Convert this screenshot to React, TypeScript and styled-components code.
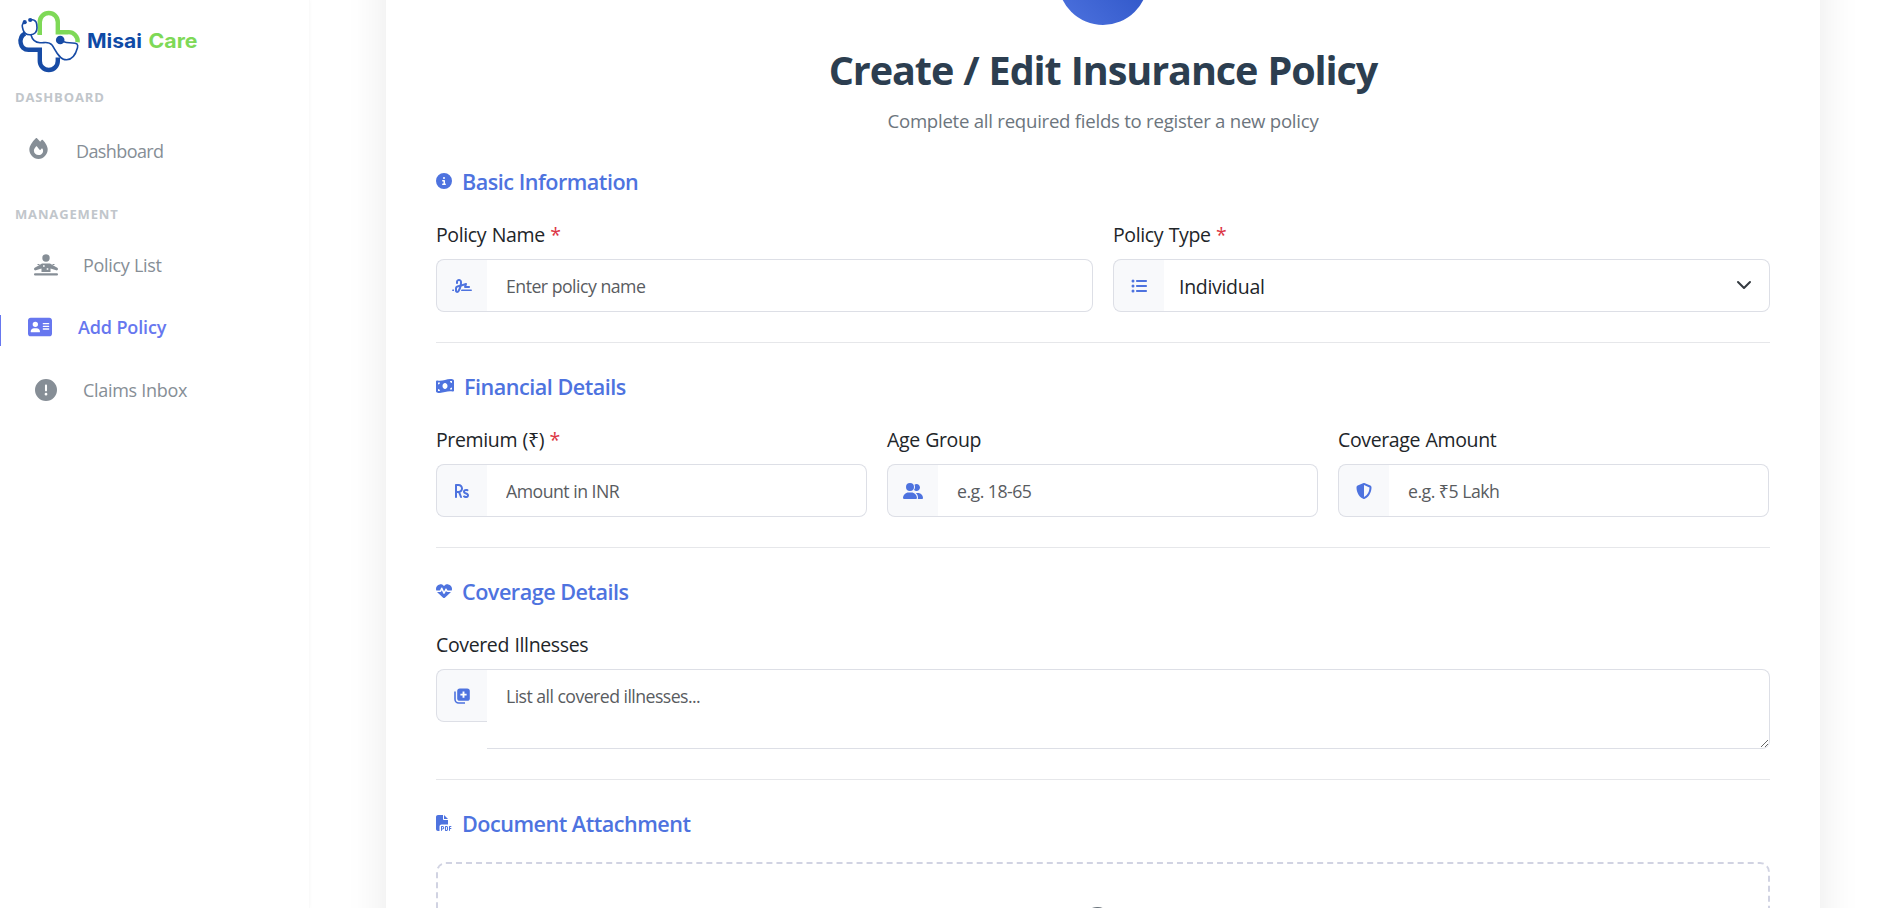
import React from "react";
import styled, { createGlobalStyle } from "styled-components";
import {
  FaAddressCard,
  FaCircleExclamation,
  FaCircleInfo,
  FaFilePdf,
  FaFire,
  FaHeartPulse,
  FaListUl,
  FaMoneyBillWave,
  FaRupeeSign,
  FaShieldHalved,
  FaSignature,
  FaUserGroup,
} from "react-icons/fa6";

const GlobalStyle = createGlobalStyle`
  *, *::before, *::after { box-sizing: border-box; }
  body {
    margin: 0;
    background: #fff;
    color: #212529;
    font-family: "Open Sans", "Noto Sans", sans-serif;
    overflow: hidden;
  }
`;

const Page = styled.div`
  display: flex;
  height: 908px;
  overflow: hidden;
`;

const Sidebar = styled.aside`
  flex: 0 0 310px;
  background: #fff;
  border-right: 1px solid #fafafa;
  box-shadow: 1px 0 3px rgba(0, 0, 0, 0.02);
`;

const Brand = styled.div`
  height: 84px;
  padding: 8px 0 0 15px;
`;

const GroupLabel = styled.div`
  height: 26px;
  padding-left: 15px;
  font-size: 13px;
  line-height: 26px;
  font-weight: 700;
  letter-spacing: 0.85px;
  color: #c1c6cb;
`;

const NavList = styled.nav<{ $top: number; $bottom: number }>`
  display: flex;
  flex-direction: column;
  padding: ${(p) => p.$top}px 0 ${(p) => p.$bottom}px;
`;

const NavItem = styled.a<{
  $active?: boolean;
  $indent: number;
  $gap: number;
  $spacing?: number;
  $lift?: number;
}>`
  display: flex;
  align-items: center;
  height: 62.5px;
  padding-left: ${(p) => p.$indent}px;
  gap: ${(p) => p.$gap}px;
  font-size: 18px;
  letter-spacing: ${(p) => p.$spacing ?? -0.3}px;
  font-weight: ${(p) => (p.$active ? 600 : 400)};
  color: ${(p) => (p.$active ? "#6777ef" : "#868e96")};
  background: ${(p) =>
    p.$active ? "linear-gradient(#6777ef, #6777ef) 0 60% / 1px 31px no-repeat" : "none"};
  svg {
    flex: none;
    margin-bottom: ${(p) => p.$lift ?? 0}px;
  }
`;

const Main = styled.main`
  flex: 1;
  padding: 0 73px 0 76px;
`;

const Card = styled.section`
  height: 1200px;
  margin-top: -115px;
  padding: 50px;
  background: #fff;
  box-shadow: 0 0 40px rgba(0, 0, 0, 0.09);
`;

const Badge = styled.div`
  width: 90px;
  height: 90px;
  margin: 0 auto;
  border-radius: 50%;
  background: linear-gradient(45deg, #4e73df, #224abe);
`;

const Title = styled.h1`
  margin: 18px 0 0;
  font-size: 39.6px;
  line-height: 54px;
  font-weight: 700;
  letter-spacing: -1.08px;
  word-spacing: 0.8px;
  text-align: center;
  color: #2c3e50;
`;

const Subtitle = styled.p`
  margin: 9px 0 32px;
  font-size: 18.6px;
  line-height: 29px;
  letter-spacing: -0.25px;
  text-align: center;
  color: #6c757d;
`;

const Section = styled.section`
  & + & {
    margin-top: 30px;
    border-top: 1px solid #e6e7ea;
    padding-top: 29px;
  }
`;

const SectionTitle = styled.h2`
  display: flex;
  align-items: center;
  gap: 10px;
  height: 30px;
  margin: 0 0 23px;
  font-size: 21.6px;
  line-height: 30px;
  font-weight: 600;
  letter-spacing: -0.5px;
  color: #4e73df;
  svg { margin-top: -3px; }
`;

const Columns = styled.div<{ $template: string }>`
  display: grid;
  grid-template-columns: ${(p) => p.$template};
  column-gap: 20px;
`;

const Label = styled.label`
  display: block;
  height: 30px;
  margin-bottom: 9px;
  font-size: 19.5px;
  line-height: 30px;
  letter-spacing: -0.36px;
  word-spacing: 0.7px;
`;

const Required = styled.span`
  color: #dc3545;
`;

const Group = styled.div`
  display: flex;
  align-items: flex-start;
`;

const Addon = styled.span`
  display: flex;
  flex: 0 0 51px;
  align-items: center;
  justify-content: center;
  height: 53px;
  border: 1px solid #dddfe6;
  border-right: 0;
  border-radius: 8px 0 0 8px;
  background: #f8f9fb;
  color: #4e73df;
`;

const Input = styled.input`
  flex: 1;
  min-width: 0;
  height: 53px;
  padding: 0 19px;
  border: 1px solid #dddfe6;
  border-left: 0;
  border-radius: 0 8px 8px 0;
  background: #fff;
  font: 400 17.7px "Open Sans", "Noto Sans", sans-serif;
  letter-spacing: -0.51px;
  outline: none;
  &::placeholder { color: #595c5f; opacity: 1; }
`;

const TextArea = styled(Input).attrs({ as: "textarea" })`
  height: 80px;
  padding: 14px 19px;
  letter-spacing: -0.55px;
  resize: vertical;
`;

const Select = styled.div`
  display: flex;
  flex: 1;
  align-items: center;
  justify-content: space-between;
  height: 53px;
  padding: 2px 17px 0 15px;
  border: 1px solid #dddfe6;
  border-left: 0;
  border-radius: 0 8px 8px 0;
  font-size: 19.5px;
  letter-spacing: -0.3px;
  svg { margin-bottom: 3px; }
`;

const DropZone = styled.div`
  display: flex;
  justify-content: center;
  height: 200px;
  padding: 42px 10px 0 0;
  border: 2px dashed #d1d3e2;
  border-radius: 10px;
  color: #6c757d;
`;

function Logo() {
  return (
    <svg width="190" height="66" viewBox="15 8 190 66" fill="none" strokeLinecap="butt">
      <path d="M39.8 34.5V22a9 9 0 0 1 18 0v10.2H68a9 9 0 0 1 9.6 10" stroke="#7ed957" strokeWidth="4.4" />
      <path d="M37.5 34h4.5" stroke="#7ed957" strokeWidth="2" />
      <path d="M25 33.5c-7 4-5.6 16.3 3.5 16.3H39.8V61a9 9 0 0 0 18 0v-3.5" stroke="#174ba5" strokeWidth="4.4" />
      <path
        d="M24.5 22.5c-3 1.5-2.5 3.500-1.500 7 1 4 3.500 5.500 7.500 5.300 4-.3 6.500-2.500 6.500-7 0-4.500-.5-8.300-6.500-8.300M31 35c1.500 5.500 4 7.500 9 7.800 5 .2 8.500-1.800 12 2.200 3 3.500 6.500 14.800 14.500 14.800 6 0 9.500-6.500 11-12 1-4-1-4.800-5-4.800-4 0-7.500-.5-12-2.300"
        stroke="#174ba5"
        strokeWidth="1.6"
      />
      <circle cx="24.7" cy="22.2" r="2.1" fill="#174ba5" />
      <circle cx="30.2" cy="20" r="2.1" fill="#174ba5" />
      <circle cx="60.2" cy="40" r="4.3" fill="#174ba5" />
      <text y="47.5" fontFamily="Inter, sans-serif" fontWeight="700" fontSize="19.8">
        <tspan x="87" textLength="55" lengthAdjust="spacingAndGlyphs" fill="#0e4aa6">Misai</tspan>
        <tspan x="148.5" textLength="49" lengthAdjust="spacingAndGlyphs" fill="#7ed957">Care</tspan>
      </text>
    </svg>
  );
}

function DeskPersonIcon() {
  return (
    <svg width="24" height="22" viewBox="0 0 24 22" fill="currentColor">
      <circle cx="12" cy="4" r="3.7" />
      <path
        fillRule="evenodd"
        d="M5.500 11 8 9.500h8l2.500 1.500 4.800 2.800c1.400.9.400 3-1.200 2.500L16.500 14.500V18h-9v-3.500l-5.600 1.800C.300 16.800-.700 14.700.700 13.800ZM9 11.300v1.400h1.700v-1.400ZM12.700 14.300v1.500h1.600v-1.500Z"
      />
      <path d="M3.5 10.500h2M18.500 10.500h2" stroke="currentColor" strokeWidth="1" />
      <rect x="0" y="19.2" width="24" height="2.3" rx="1.1" />
    </svg>
  );
}

function StackPlusIcon() {
  return (
    <svg width="16" height="16" viewBox="0 0 16 16">
      <path d="M1 3.500v7.800A3.700 3.700 0 0 0 4.700 15H11" fill="none" stroke="currentColor" strokeWidth="1.6" />
      <rect x="3.2" y="0.500" width="12.600" height="12.300" rx="2.600" fill="currentColor" />
      <path d="M9.500 3.500v6.200M6.400 6.600h6.200" stroke="#fff" strokeWidth="1.9" />
    </svg>
  );
}

function ChevronIcon() {
  return (
    <svg width="16" height="16" viewBox="0 0 16 16" fill="none">
      <path d="m2 5 6 6 6-6" stroke="#343a40" strokeWidth="2" strokeLinecap="round" strokeLinejoin="round" />
    </svg>
  );
}

function CloudIcon() {
  return (
    <svg width="40" height="32" viewBox="0 0 40 32" fill="currentColor">
      <path d="M9 32a9 9 0 0 1-3-17.500A13 13 0 0 1 20 1a11 11 0 0 1 10 7 8 8 0 0 1 5 8 8 8 0 0 1-3 16Z" />
    </svg>
  );
}

interface FieldProps {
  label: string;
  icon: React.ReactNode;
  required?: boolean;
  children: React.ReactNode;
}

function Field({ label, icon, required, children }: FieldProps) {
  return (
    <div>
      <Label>
        {label} {required && <Required>*</Required>}
      </Label>
      <Group>
        <Addon>{icon}</Addon>
        {children}
      </Group>
    </div>
  );
}

export default function App() {
  return (
    <Page>
      <GlobalStyle />
      <Sidebar>
        <Brand>
          <Logo />
        </Brand>
        <GroupLabel>DASHBOARD</GroupLabel>
        <NavList $top={10} $bottom={18}>
          <NavItem $indent={28} $gap={27} $spacing={-0.6} $lift={6}>
            <FaFire size={21} />
            Dashboard
          </NavItem>
        </NavList>
        <GroupLabel>MANAGEMENT</GroupLabel>
        <NavList $top={7} $bottom={0}>
          <NavItem $indent={34} $gap={25}>
            <DeskPersonIcon />
            Policy List
          </NavItem>
          <NavItem $indent={28} $gap={26} $spacing={-0.15} $active>
            <FaAddressCard size={24} />
            Add Policy
          </NavItem>
          <NavItem $indent={35} $gap={26}>
            <FaCircleExclamation size={22} />
            Claims Inbox
          </NavItem>
        </NavList>
      </Sidebar>
      <Main>
        <Card>
          <Badge />
          <Title>Create / Edit Insurance Policy</Title>
          <Subtitle>Complete all required fields to register a new policy</Subtitle>

          <Section>
            <SectionTitle>
              <FaCircleInfo size={16} />
              Basic Information
            </SectionTitle>
            <Columns $template="1fr 1fr">
              <Field label="Policy Name" required icon={<FaSignature size={20} />}>
                <Input placeholder="Enter policy name" />
              </Field>
              <Field label="Policy Type" required icon={<FaListUl size={16} />}>
                <Select>
                  Individual
                  <ChevronIcon />
                </Select>
              </Field>
            </Columns>
          </Section>

          <Section>
            <SectionTitle>
              <FaMoneyBillWave size={18} />
              Financial Details
            </SectionTitle>
            <Columns $template="repeat(3, 431px)">
              <Field label="Premium (₹)" required icon={<FaRupeeSign size={16} />}>
                <Input placeholder="Amount in INR" />
              </Field>
              <Field label="Age Group" icon={<FaUserGroup size={20} />}>
                <Input placeholder="e.g. 18-65" />
              </Field>
              <Field label="Coverage Amount" icon={<FaShieldHalved size={16} />}>
                <Input placeholder="e.g. ₹5 Lakh" />
              </Field>
            </Columns>
          </Section>

          <Section>
            <SectionTitle>
              <FaHeartPulse size={16} />
              Coverage Details
            </SectionTitle>
            <Field label="Covered Illnesses" icon={<StackPlusIcon />}>
              <TextArea placeholder="List all covered illnesses..." />
            </Field>
          </Section>

          <Section>
            <SectionTitle>
              <FaFilePdf size={16} />
              Document Attachment
            </SectionTitle>
            <DropZone>
              <CloudIcon />
            </DropZone>
          </Section>
        </Card>
      </Main>
    </Page>
  );
}
